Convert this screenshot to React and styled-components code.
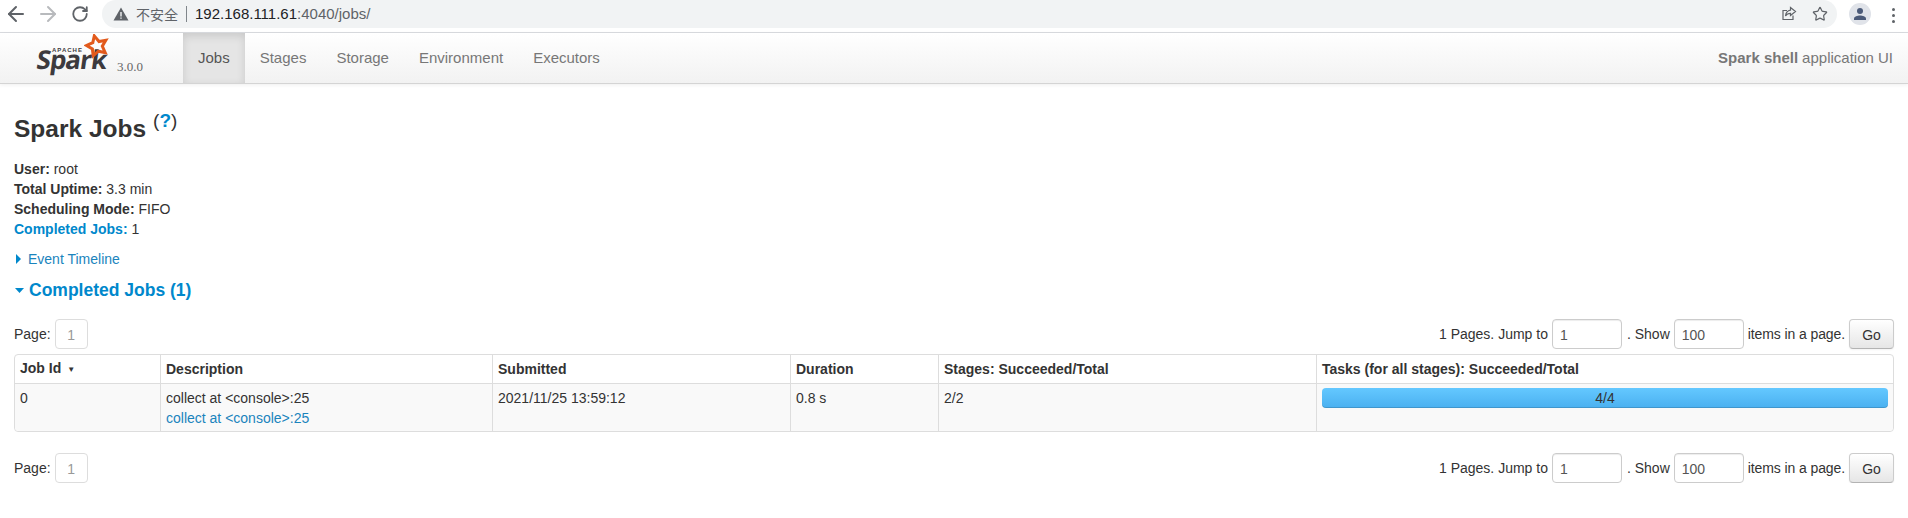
import React from 'react'
import styled, { createGlobalStyle } from 'styled-components'
import { ArrowLeft, ArrowRight, RotateCw, Star } from 'lucide-react'

const Global = createGlobalStyle`
  html, body { margin: 0; padding: 0; background: #fff; }
  body {
    font-family: "Liberation Sans", Arial, sans-serif;
    font-size: 14px;
    line-height: 20px;
    color: #333;
  }
`

const ChromeBar = styled.div`
  display: flex;
  align-items: flex-start;
  height: 32px;
  border-bottom: 1px solid #dadce0;
  background: #fff;
`
const NavButtons = styled.div`
  display: flex;
  align-items: center;
  height: 28px;
  width: 102px;
  flex: none;
  padding-left: 4px;
  gap: 8px;
  box-sizing: border-box;
`
const IconSlot = styled.span`
  display: flex;
  align-items: center;
  justify-content: center;
  width: 24px;
  height: 24px;
`
const UrlPill = styled.div`
  display: flex;
  align-items: center;
  height: 28px;
  width: 1735px;
  flex: none;
  box-sizing: border-box;
  padding: 0 9px 0 11px;
  background: #f1f3f4;
  border-radius: 14px;
  font-size: 15px;
`
const Insecure = styled.span`
  color: #5f6368;
  font-family: "Noto Sans CJK SC", sans-serif;
  font-size: 14px;
  margin-left: 7px;
  line-height: 20px;
`
const Divider = styled.span`
  width: 1px;
  height: 16px;
  background: #80868b;
  margin: 0 8px 0 8px;
`
const UrlHost = styled.span`
  color: #202124;
`
const UrlRest = styled.span`
  color: #5f6368;
`
const PillIcons = styled.div`
  margin-left: auto;
  display: flex;
  align-items: center;
  gap: 15px;
`
const Avatar = styled.div`
  width: 22px;
  height: 22px;
  margin: 3px 0 0 12px;
  border-radius: 50%;
  background: #e0e3e9;
  display: flex;
  align-items: center;
  justify-content: center;
  flex: none;
`
const Dots = styled.div`
  display: flex;
  flex-direction: column;
  gap: 3px;
  margin: 8px 0 0 21px;
  i {
    width: 3px;
    height: 3px;
    border-radius: 50%;
    background: #5f6368;
    display: block;
  }
`

const NavBar = styled.nav`
  display: flex;
  align-items: stretch;
  height: 50px;
  border-bottom: 1px solid #d4d4d4;
  background: linear-gradient(to bottom, #ffffff, #f2f2f2);
  box-shadow: 0 1px 4px rgba(0, 0, 0, 0.065);
  font-size: 15px;
`
const Brand = styled.div`
  position: relative;
  width: 183px;
  flex: none;
`
const SparkWord = styled.span`
  position: absolute;
  left: 37px;
  top: 15px;
  font-family: "Open Sans", sans-serif;
  font-weight: 700;
  font-size: 26px;
  line-height: 22px;
  letter-spacing: -1px;
  color: #3c3a3e;
  transform: skewX(-8deg);
`
const ApacheWord = styled.span`
  position: absolute;
  left: 52px;
  top: 13px;
  font-size: 6px;
  line-height: 8px;
  font-weight: 700;
  letter-spacing: 1px;
  color: #3c3a3e;
`
const StarMark = styled.svg`
  position: absolute;
  left: 84px;
  top: 1px;
`
const Version = styled.span`
  position: absolute;
  left: 117px;
  top: 24px;
  font-family: "Liberation Serif", serif;
  font-size: 13px;
  font-weight: 400;
  color: #666;
`
const NavTab = styled.a`
  display: flex;
  align-items: center;
  padding: 0 15px;
  color: ${(props) => (props.$active ? '#555' : '#777')};
  background: ${(props) => (props.$active ? '#e5e5e5' : 'transparent')};
  box-shadow: ${(props) => (props.$active ? 'inset 0 3px 8px rgba(0,0,0,0.125)' : 'none')};
`
const AppName = styled.div`
  margin-left: auto;
  display: flex;
  align-items: center;
  gap: 4px;
  padding-right: 15px;
  color: #777;
  strong { font-weight: 700; }
`

const Content = styled.main`
  padding: 0 14px;
`
const Title = styled.h3`
  margin: 29px 0 0;
  height: 46px;
  font-size: 24.5px;
  line-height: 32px;
  font-weight: 700;
  color: #333;
  sup {
    font-size: 19px;
    line-height: 0;
    font-weight: 400;
    position: relative;
    top: -1px;
    margin-left: 7px;
    vertical-align: super;
  }
  sup a { color: #0088cc; font-weight: 700; }
`
const InfoList = styled.ul`
  list-style: none;
  margin: 0;
  padding: 0;
  strong { font-weight: 700; }
`
const InfoRow = styled.li`
  height: 20px;
  strong { color: ${(props) => (props.$link ? '#0088cc' : 'inherit')}; }
`
const TimelineToggle = styled.div`
  display: flex;
  align-items: center;
  margin-top: 10px;
  height: 20px;
  color: #1a84bd;
  padding-left: 2px;
  gap: 7px;
`
const SectionTitle = styled.h4`
  display: flex;
  align-items: center;
  margin: 10px 0 0;
  height: 22px;
  font-size: 17.5px;
  line-height: 22px;
  font-weight: 700;
  color: #0088cc;
  padding-left: 1px;
  gap: 5px;
`
const Pager = styled.div`
  display: flex;
  align-items: center;
  height: 30px;
  margin-top: ${(props) => props.$top}px;
`
const PageBox = styled.span`
  width: 33px;
  height: 30px;
  box-sizing: border-box;
  margin-left: 4px;
  display: flex;
  align-items: center;
  justify-content: center;
  border: 1px solid #ddd;
  border-radius: 4px;
  color: #999;
  padding-top: 2px;
`
const PagerRight = styled.div`
  margin-left: auto;
  display: flex;
  align-items: center;
`
const NumInput = styled.span`
  width: 70px;
  height: 30px;
  box-sizing: border-box;
  margin: 0 5px 0 4px;
  padding: 2px 0 0 7px;
  display: flex;
  align-items: center;
  border: 1px solid #ccc;
  border-radius: 4px;
  color: #555;
  box-shadow: inset 0 1px 1px rgba(0, 0, 0, 0.075);
`
const ItemsLabel = styled.span`
  letter-spacing: -0.1px;
  margin-left: -1px;
`
const GoButton = styled.button`
  width: 45px;
  height: 30px;
  margin-left: 4px;
  padding: 2px 0 0;
  border: 1px solid #ccc;
  border-bottom-color: #b3b3b3;
  border-radius: 4px;
  background: linear-gradient(to bottom, #ffffff, #e6e6e6);
  font-family: inherit;
  font-size: 14px;
  color: #333;
  box-shadow: inset 0 1px 0 rgba(255, 255, 255, 0.2), 0 1px 2px rgba(0, 0, 0, 0.05);
`
const JobsTable = styled.table`
  width: 1880px;
  margin-top: 5px;
  table-layout: fixed;
  border-collapse: separate;
  border-spacing: 0;
  border: 1px solid #ddd;
  border-radius: 4px;
`
const HeadCell = styled.th`
  height: 29px;
  box-sizing: border-box;
  padding: 0 5px;
  text-align: left;
  font-weight: 700;
  color: #333;
  border-left: ${(props) => (props.$first ? 'none' : '1px solid #ddd')};
  border-bottom: 1px solid #ddd;
`
const BodyCell = styled.td`
  height: 47px;
  box-sizing: border-box;
  padding: 4px 5px 0;
  vertical-align: top;
  background: #f9f9f9;
  border-left: ${(props) => (props.$first ? 'none' : '1px solid #ddd')};
  border-radius: ${(props) => props.$radius || '0'};
`
const SortMark = styled.span`
  font-size: 8px;
  margin-left: 6px;
  vertical-align: 1px;
`
const JobLink = styled.a`
  display: block;
  color: #1a84bd;
`
const Progress = styled.div`
  height: 20px;
  border-radius: 4px;
  background: linear-gradient(to bottom, #64c8ff, #4ab0f0);
  box-shadow: inset 0 -1px 0 rgba(0, 0, 0, 0.15);
  text-align: center;
  color: #333;
  line-height: 20px;
`

const columns = [145, 332, 298, 148, 378, 577]

const Paging = ({ top }) => (
  <Pager $top={top}>
    Page:
    <PageBox>1</PageBox>
    <PagerRight>
      1 Pages. Jump to
      <NumInput>1</NumInput>
      . Show
      <NumInput>100</NumInput>
      <ItemsLabel>items in a page.</ItemsLabel>
      <GoButton>Go</GoButton>
    </PagerRight>
  </Pager>
)

export default function App() {
  return (
    <>
      <Global />
      <ChromeBar>
        <NavButtons>
          <IconSlot>
            <ArrowLeft size={24} color='#5f6368' strokeWidth={2} />
          </IconSlot>
          <IconSlot>
            <ArrowRight size={24} color='#b8babd' strokeWidth={2} />
          </IconSlot>
          <IconSlot>
            <RotateCw size={18} color='#5f6368' strokeWidth={2.4} />
          </IconSlot>
        </NavButtons>
        <UrlPill>
          <svg width='16' height='16' viewBox='0 0 16 16'>
            <path d='M8 1.5 15.5 14.5H.5Z' fill='#5f6368' />
            <path d='M7.3 6h1.4v4.5H7.3ZM7.3 11.4h1.4v1.4H7.3Z' fill='#f1f3f4' />
          </svg>
          <Insecure>不安全</Insecure>
          <Divider />
          <UrlHost>192.168.111.61</UrlHost>
          <UrlRest>:4040/jobs/</UrlRest>
          <PillIcons>
            <svg width='16' height='16' viewBox='0 0 16 16' fill='none' stroke='#5f6368' strokeWidth='1.2'>
              <path d='M12 9.5V13.5H2V4.5H6' />
              <path d='M9.5 1.5 14.5 5.5 9.5 9.5V7.3C7.3 7.3 5.6 8.2 4.5 10 4.8 7.2 6.6 4.5 9.5 4.1Z' />
            </svg>
            <Star size={16} color='#5f6368' strokeWidth={1.8} />
          </PillIcons>
        </UrlPill>
        <Avatar>
          <svg width='14' height='14' viewBox='0 0 14 14' fill='#4b5a78'>
            <circle cx='7' cy='4' r='3' />
            <path d='M1 13V11.5C1 9.5 4.5 8.5 7 8.5S13 9.5 13 11.5V13Z' />
          </svg>
        </Avatar>
        <Dots>
          <i />
          <i />
          <i />
        </Dots>
      </ChromeBar>

      <NavBar>
        <Brand>
          <ApacheWord>APACHE</ApacheWord>
          <SparkWord>Spark</SparkWord>
          <StarMark width='26' height='26' viewBox='0 0 26 26'>
            <path
              d='M10.3 1.9 15 7.5 21.8 6.3 18.3 12.2 21.2 18.6 14.4 17.2 9.2 21.8 8.4 15 2.5 11.5 8.8 8.6Z'
              fill='none'
              stroke='#e25a1c'
              strokeWidth='3'
              strokeLinejoin='miter'
            />
          </StarMark>
          <Version>3.0.0</Version>
        </Brand>
        <NavTab $active>Jobs</NavTab>
        <NavTab>Stages</NavTab>
        <NavTab>Storage</NavTab>
        <NavTab>Environment</NavTab>
        <NavTab>Executors</NavTab>
        <AppName>
          <strong>Spark shell</strong> application UI
        </AppName>
      </NavBar>

      <Content>
        <Title>
          Spark Jobs
          <sup>
            (<a>?</a>)
          </sup>
        </Title>
        <InfoList>
          <InfoRow>
            <strong>User:</strong> root
          </InfoRow>
          <InfoRow>
            <strong>Total Uptime:</strong> 3.3 min
          </InfoRow>
          <InfoRow>
            <strong>Scheduling Mode:</strong> FIFO
          </InfoRow>
          <InfoRow $link>
            <strong>Completed Jobs:</strong> 1
          </InfoRow>
        </InfoList>
        <TimelineToggle>
          <svg width='5' height='10' viewBox='0 0 5 10'>
            <path d='M0 0 5 5 0 10Z' fill='#0088cc' />
          </svg>
          Event Timeline
        </TimelineToggle>
        <SectionTitle>
          <svg width='9' height='5' viewBox='0 0 9 5'>
            <path d='M0 0H9L4.5 5Z' fill='#0088cc' />
          </svg>
          Completed Jobs (1)
        </SectionTitle>
        <Paging top={18} />
        <JobsTable>
          <colgroup>
            {columns.map((w, i) => (
              <col key={i} width={w} />
            ))}
          </colgroup>
          <thead>
            <tr>
              <HeadCell $first>
                Job Id<SortMark>▼</SortMark>
              </HeadCell>
              <HeadCell>Description</HeadCell>
              <HeadCell>Submitted</HeadCell>
              <HeadCell>Duration</HeadCell>
              <HeadCell>Stages: Succeeded/Total</HeadCell>
              <HeadCell>Tasks (for all stages): Succeeded/Total</HeadCell>
            </tr>
          </thead>
          <tbody>
            <tr>
              <BodyCell $first $radius='0 0 0 4px'>
                0
              </BodyCell>
              <BodyCell>
                collect at &lt;console&gt;:25
                <JobLink>collect at &lt;console&gt;:25</JobLink>
              </BodyCell>
              <BodyCell>2021/11/25 13:59:12</BodyCell>
              <BodyCell>0.8 s</BodyCell>
              <BodyCell>2/2</BodyCell>
              <BodyCell $radius='0 0 4px 0'>
                <Progress>4/4</Progress>
              </BodyCell>
            </tr>
          </tbody>
        </JobsTable>
        <Paging top={21} />
      </Content>
    </>
  )
}
